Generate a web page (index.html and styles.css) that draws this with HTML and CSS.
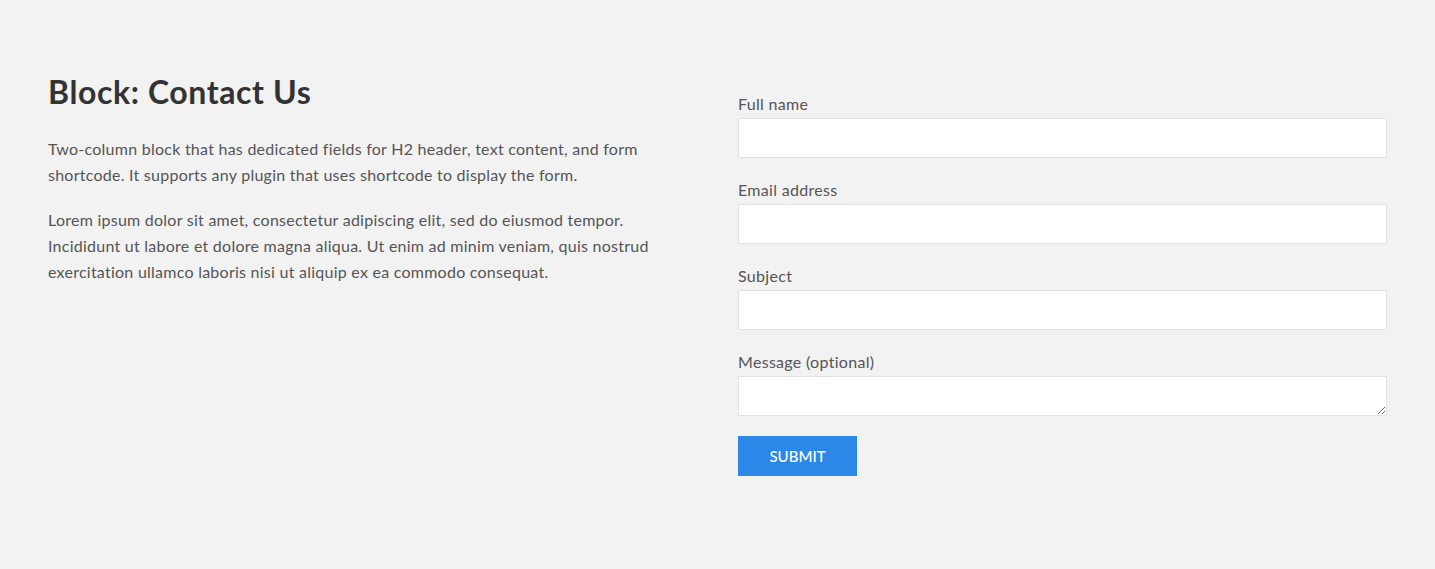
FILE: index.html
```html
<!DOCTYPE html>
<html lang="en">
<head>
<meta charset="utf-8">
<title>Block: Contact Us</title>
<link rel="stylesheet" href="styles.css">
</head>
<body>
<section class="contact">
  <div class="intro">
    <h2 class="title">Block: Contact Us</h2>
    <p class="text">Two-column block that has dedicated fields for H2 header, text content, and form shortcode. It supports any plugin that uses shortcode to display the form.</p>
    <p class="text">Lorem ipsum dolor sit amet, consectetur adipiscing elit, sed do eiusmod tempor. Incididunt ut labore et dolore magna aliqua. Ut enim ad minim veniam, quis nostrud exercitation ullamco laboris nisi ut aliquip ex ea commodo consequat.</p>
  </div>
  <form class="form">
    <label class="field"><span class="label">Full name</span><input class="input" type="text"></label>
    <label class="field"><span class="label">Email address</span><input class="input" type="email"></label>
    <label class="field"><span class="label">Subject</span><input class="input" type="text"></label>
    <label class="field"><span class="label">Message (optional)</span><textarea class="input textarea"></textarea></label>
    <button class="submit" type="button">SUBMIT</button>
  </form>
</section>
</body>
</html>
```
FILE: styles.css
```css
html, body {
  margin: 0;
  padding: 0;
  background: #f2f2f2;
}
body {
  font-family: "Lato", "Liberation Sans", sans-serif;
  color: #555;
}
.contact {
  display: grid;
  grid-template-columns: 1fr 1fr;
  column-gap: 41px;
  padding: 72px 48px 80px;
}
.intro {
  max-width: 625px;
}
.title {
  margin: 0 0 24px;
  font-size: 32px;
  line-height: 40px;
  font-weight: 700;
  letter-spacing: 0.6px;
  color: #333;
}
.text {
  margin: 0 0 19px;
  font-size: 16px;
  line-height: 26px;
  letter-spacing: 0.25px;
  color: #555;
}
.form {
  display: flex;
  flex-direction: column;
  padding-top: 22px;
}
.field {
  display: flex;
  flex-direction: column;
  gap: 4px;
  margin-bottom: 22px;
}
.label {
  font-size: 16px;
  line-height: 20px;
  letter-spacing: 0.3px;
  color: #555;
}
.input {
  box-sizing: border-box;
  height: 40px;
  border: 1px solid #e2e2e2;
  background: #fff;
  margin: 0;
  padding: 8px 12px;
  font: inherit;
}
.textarea {
  resize: vertical;
  display: block;
}
.field:last-of-type {
  margin-bottom: 20px;
}
.submit {
  align-self: flex-start;
  width: 119px;
  height: 40px;
  border: 0;
  background: #2b87e8;
  color: #fff;
  font-family: inherit;
  font-size: 15px;
  font-weight: 500;
}
```
